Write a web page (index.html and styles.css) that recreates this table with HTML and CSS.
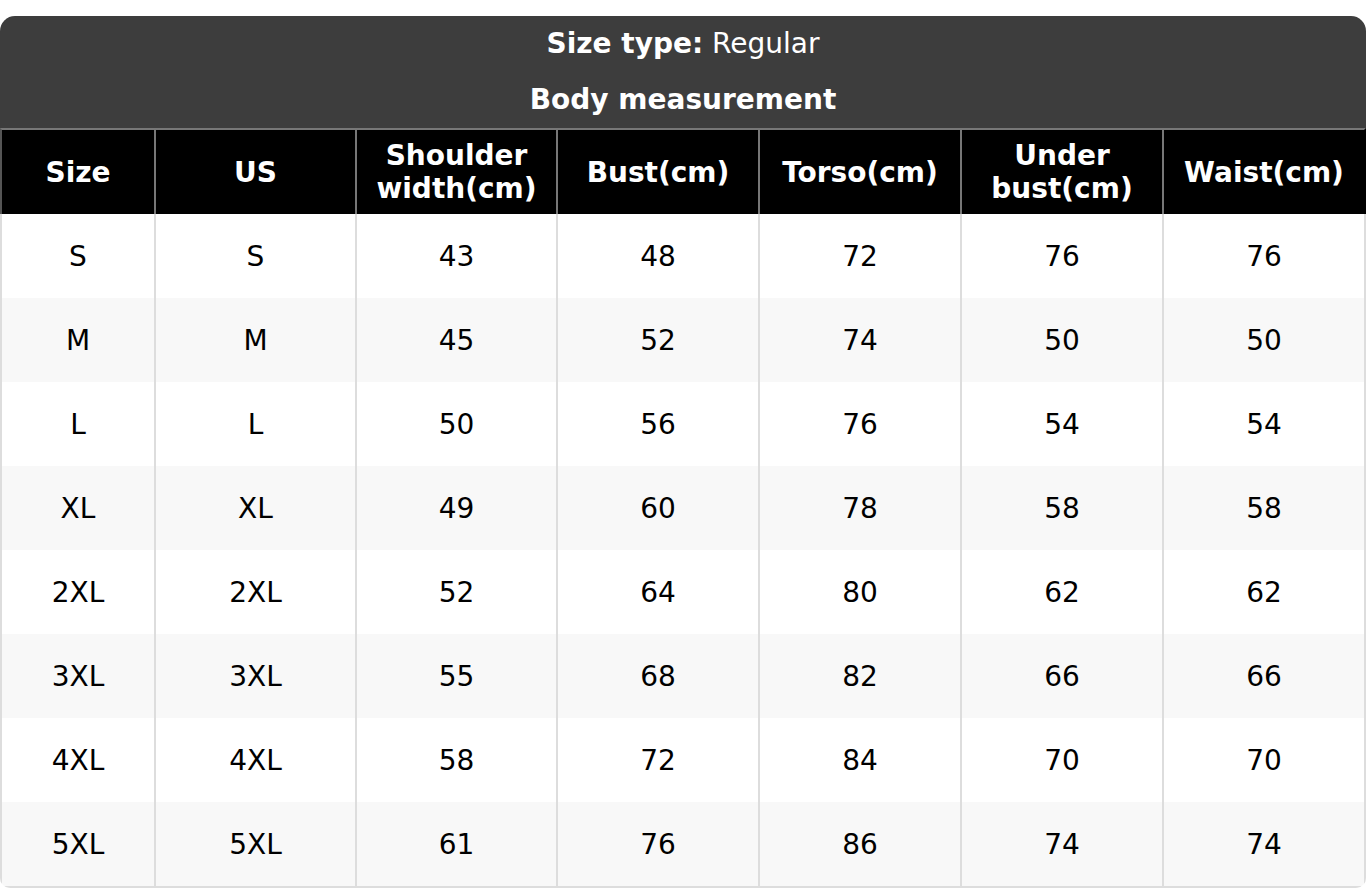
FILE: index.html
```html
<!DOCTYPE html>
<html lang="en">
<head>
<meta charset="utf-8">
<title>Size chart</title>
<link rel="stylesheet" href="styles.css">
</head>
<body>
<div class="card">
  <div class="title">
    <div class="title-line"><b>Size type:</b> Regular</div>
    <div class="title-line"><b>Body measurement</b></div>
  </div>
  <table class="chart">
    <colgroup>
      <col class="c1"><col class="c2"><col class="c2"><col class="c3"><col class="c3"><col class="c3"><col class="c4">
    </colgroup>
    <thead>
      <tr>
        <th>Size</th><th>US</th><th>Shoulder<br>width(cm)</th><th>Bust(cm)</th><th>Torso(cm)</th><th>Under<br>bust(cm)</th><th>Waist(cm)</th>
      </tr>
    </thead>
    <tbody>
      <tr><td>S</td><td>S</td><td>43</td><td>48</td><td>72</td><td>76</td><td>76</td></tr>
      <tr><td>M</td><td>M</td><td>45</td><td>52</td><td>74</td><td>50</td><td>50</td></tr>
      <tr><td>L</td><td>L</td><td>50</td><td>56</td><td>76</td><td>54</td><td>54</td></tr>
      <tr><td>XL</td><td>XL</td><td>49</td><td>60</td><td>78</td><td>58</td><td>58</td></tr>
      <tr><td>2XL</td><td>2XL</td><td>52</td><td>64</td><td>80</td><td>62</td><td>62</td></tr>
      <tr><td>3XL</td><td>3XL</td><td>55</td><td>68</td><td>82</td><td>66</td><td>66</td></tr>
      <tr><td>4XL</td><td>4XL</td><td>58</td><td>72</td><td>84</td><td>70</td><td>70</td></tr>
      <tr><td>5XL</td><td>5XL</td><td>61</td><td>76</td><td>86</td><td>74</td><td>74</td></tr>
    </tbody>
  </table>
</div>
</body>
</html>
```
FILE: styles.css
```css
html, body {
  margin: 0;
  padding: 0;
  background: #ffffff;
}
body {
  padding-top: 16px;
  font-family: "DejaVu Sans", "Liberation Sans", sans-serif;
  font-size: 28px;
  color: #000000;
}
.card {
  width: 1366px;
  border-radius: 15px 15px 10px 10px;
  overflow: hidden;
}
.title {
  background: #3d3d3d;
  color: #ffffff;
  padding: 0;
}
.title-line {
  height: 56px;
  line-height: 56px;
  text-align: center;
  font-weight: normal;
}
.chart {
  width: 1366px;
  table-layout: fixed;
  border-collapse: separate;
  border-spacing: 0;
}
.c1 { width: 154px; }
.c2 { width: 201px; }
.c3 { width: 202px; }
.c4 { width: 204px; }
.chart th {
  background: #000000;
  color: #ffffff;
  font-weight: bold;
  line-height: 33px;
  height: 86px;
  padding: 0;
  box-sizing: border-box;
  border-top: 2px solid #777777;
  border-left: 2px solid #777777;
  text-align: center;
  vertical-align: middle;
}
.chart th:first-child {
  border-left: 2px solid #555555;
}
.chart td {
  height: 84px;
  padding: 0;
  box-sizing: border-box;
  border-left: 2px solid #dddddd;
  text-align: center;
  vertical-align: middle;
  font-weight: normal;
}
.chart td:last-child {
  border-right: 2px solid #dddddd;
}
.chart th:last-child {
  border-right: 2px solid #000000;
}
.chart tbody tr:nth-child(even) td {
  background: #f8f8f8;
}
.chart tbody tr:last-child td {
  border-bottom: 2px solid #dddddd;
  height: 86px;
}
```
